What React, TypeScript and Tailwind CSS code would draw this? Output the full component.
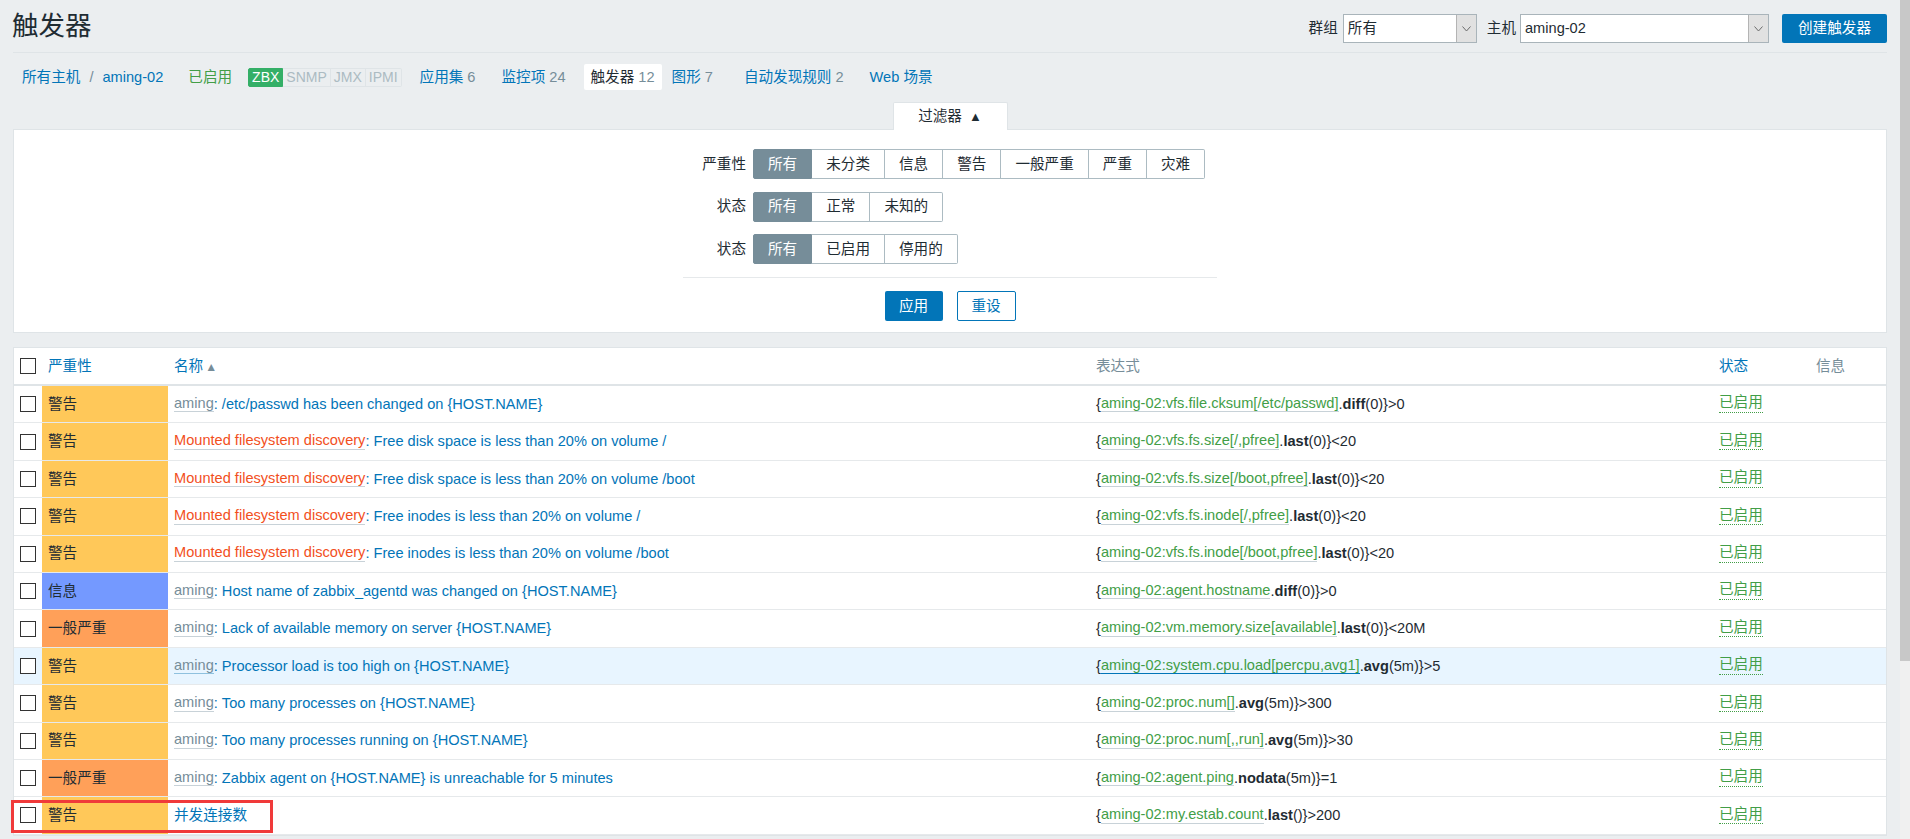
import React from 'react';

type Sev = 'warning' | 'info' | 'average';

const sevStyle: Record<Sev, { label: string; bg: string }> = {
  warning: { label: '警告', bg: 'bg-[#ffc859]' },
  info: { label: '信息', bg: 'bg-[#7499ff]' },
  average: { label: '一般严重', bg: 'bg-[#ffa059]' },
};

type Row = {
  sev: Sev;
  prefix?: string;
  orange?: boolean;
  name: string;
  item: string;
  fn: string;
  rest: string;
  hover?: boolean;
  marked?: boolean;
};

const rows: Row[] = [
  { sev: 'warning', prefix: 'aming', name: '/etc/passwd has been changed on {HOST.NAME}', item: 'aming-02:vfs.file.cksum[/etc/passwd]', fn: 'diff', rest: '(0)}>0' },
  { sev: 'warning', prefix: 'Mounted filesystem discovery', orange: true, name: 'Free disk space is less than 20% on volume /', item: 'aming-02:vfs.fs.size[/,pfree]', fn: 'last', rest: '(0)}<20' },
  { sev: 'warning', prefix: 'Mounted filesystem discovery', orange: true, name: 'Free disk space is less than 20% on volume /boot', item: 'aming-02:vfs.fs.size[/boot,pfree]', fn: 'last', rest: '(0)}<20' },
  { sev: 'warning', prefix: 'Mounted filesystem discovery', orange: true, name: 'Free inodes is less than 20% on volume /', item: 'aming-02:vfs.fs.inode[/,pfree]', fn: 'last', rest: '(0)}<20' },
  { sev: 'warning', prefix: 'Mounted filesystem discovery', orange: true, name: 'Free inodes is less than 20% on volume /boot', item: 'aming-02:vfs.fs.inode[/boot,pfree]', fn: 'last', rest: '(0)}<20' },
  { sev: 'info', prefix: 'aming', name: 'Host name of zabbix_agentd was changed on {HOST.NAME}', item: 'aming-02:agent.hostname', fn: 'diff', rest: '(0)}>0' },
  { sev: 'average', prefix: 'aming', name: 'Lack of available memory on server {HOST.NAME}', item: 'aming-02:vm.memory.size[available]', fn: 'last', rest: '(0)}<20M' },
  { sev: 'warning', prefix: 'aming', name: 'Processor load is too high on {HOST.NAME}', item: 'aming-02:system.cpu.load[percpu,avg1]', fn: 'avg', rest: '(5m)}>5', hover: true },
  { sev: 'warning', prefix: 'aming', name: 'Too many processes on {HOST.NAME}', item: 'aming-02:proc.num[]', fn: 'avg', rest: '(5m)}>300' },
  { sev: 'warning', prefix: 'aming', name: 'Too many processes running on {HOST.NAME}', item: 'aming-02:proc.num[,,run]', fn: 'avg', rest: '(5m)}>30' },
  { sev: 'average', prefix: 'aming', name: 'Zabbix agent on {HOST.NAME} is unreachable for 5 minutes', item: 'aming-02:agent.ping', fn: 'nodata', rest: '(5m)}=1' },
  { sev: 'warning', name: '并发连接数', item: 'aming-02:my.estab.count', fn: 'last', rest: '()}>200', marked: true },
];

function Checkbox() {
  return <div className="w-[16px] h-[16px] border-[1.5px] border-[#333] bg-white" />;
}

function Select({ value, width }: { value: string; width: string }) {
  return (
    <div className={`${width} h-[29px] flex border border-[#a9b4ba] bg-white`}>
      <div className="flex-1 flex items-center pl-[4px] text-[#1f2c33]">{value}</div>
      <div className="w-[20px] flex items-center justify-center bg-[#e1e1e1] border-l border-[#b4b4b4]">
        <svg width="9" height="6" viewBox="0 0 9 6" fill="none">
          <path d="M0.5 0.5 L4.5 5 L8.5 0.5" stroke="#6b6b6b" strokeWidth="1" />
        </svg>
      </div>
    </div>
  );
}

function Radio({ items }: { items: string[] }) {
  return (
    <div className="flex">
      {items.map((t, i) => (
        <div
          key={t}
          className={`h-[30px] px-[14px] flex items-center border-y border-r ${
            i === 0
              ? 'border-l rounded-l-[2px] bg-[#768d99] border-[#768d99] text-white'
              : 'border-[#acbbc2] bg-white text-[#1f2c33]'
          } ${i === items.length - 1 ? 'rounded-r-[2px]' : ''}`}
        >
          {t}
        </div>
      ))}
    </div>
  );
}

function NavLink({ label, count, className = '' }: { label: string; count?: string; className?: string }) {
  return (
    <div className={`px-[8px] h-[26px] flex items-center ${className}`}>
      <span className="text-[#0275b8]">{label}</span>
      {count && <span className="text-[#768d99] ml-[4px]">{count}</span>}
    </div>
  );
}

export default function App() {
  return (
    <div className="flex w-[1910px] h-[839px] overflow-hidden bg-[#ebeef0] font-['Liberation_Sans','Noto_Sans_CJK_SC',sans-serif] text-[14.6px] text-[#1f2c33] leading-none">
      <div className="flex-1 px-[13px] min-w-0">
        {/* header */}
        <div className="h-[53px] flex items-center justify-between border-b border-[#dfe4e7]">
          <h1 className="text-[26.5px] text-[#1f2c33] -ml-[1px] mt-[1px]">触发器</h1>
          <div className="flex items-center mt-[5px]">
            <span className="mr-[5px]">群组</span>
            <Select value="所有" width="w-[134px]" />
            <span className="ml-[10px] mr-[4px]">主机</span>
            <Select value="aming-02" width="w-[249px]" />
            <div className="ml-[13px] w-[105px] h-[29px] rounded-[2px] bg-[#0275b8] text-white flex items-center justify-center">
              创建触发器
            </div>
          </div>
        </div>

        {/* host navigation */}
        <div className="h-[48px] flex items-center">
          <span className="ml-[9px] text-[#0275b8]">所有主机</span>
          <span className="mx-[9px] text-[#768d99]">/</span>
          <span className="text-[#0275b8]">aming-02</span>
          <span className="ml-[25px] text-[#429e47]">已启用</span>
          <div className="ml-[16px] flex h-[19px] text-[14px]">
            <div className="px-[3px] flex items-center rounded-l-[2px] bg-[#34af67] border border-[#34af67] text-white">ZBX</div>
            <div className="px-[3px] flex items-center border border-l-0 border-[#dfe4e7] text-[#acbbc2]">SNMP</div>
            <div className="px-[3px] flex items-center border border-l-0 border-[#dfe4e7] text-[#acbbc2]">JMX</div>
            <div className="px-[3px] flex items-center rounded-r-[2px] border border-l-0 border-[#dfe4e7] text-[#acbbc2]">IPMI</div>
          </div>
          <div className="ml-[10px] flex items-center">
            <NavLink label="应用集" count="6" />
            <NavLink label="监控项" count="24" className="ml-[10px]" />
            <div className="ml-[10px] px-[7px] h-[26px] flex items-center bg-white rounded-[2px]">
              <span>触发器</span>
              <span className="text-[#768d99] ml-[4px]">12</span>
            </div>
            <NavLink label="图形" count="7" className="ml-[2px]" />
            <NavLink label="自动发现规则" count="2" className="ml-[15px]" />
            <NavLink label="Web 场景" className="ml-[10px]" />
          </div>
        </div>

        {/* filter */}
        <div className="flex justify-center">
          <div className="w-[115px] h-[28px] bg-white border border-b-0 border-[#dfe4e7] rounded-t-[2px] flex items-center justify-center gap-[7px] relative top-[1px]">
            <span>过滤器</span>
            <span className="text-[13px]">▲</span>
          </div>
        </div>
        <div className="h-[204px] bg-white border border-[#dfe4e7] flex flex-col items-center pt-[19px]">
          <div className="w-[534px] grid grid-cols-[63px_1fr] gap-x-[7px] gap-y-[12.5px] items-center">
            <div className="text-right">严重性</div>
            <Radio items={['所有', '未分类', '信息', '警告', '一般严重', '严重', '灾难']} />
            <div className="text-right">状态</div>
            <Radio items={['所有', '正常', '未知的']} />
            <div className="text-right">状态</div>
            <Radio items={['所有', '已启用', '停用的']} />
          </div>
          <div className="w-[534px] mt-[13px] border-t border-[#e6e9eb]" />
          <div className="mt-[13px] flex gap-[14px]">
            <div className="w-[58px] h-[30px] rounded-[2px] bg-[#0275b8] text-white flex items-center justify-center">应用</div>
            <div className="w-[59px] h-[30px] rounded-[2px] border border-[#0275b8] text-[#0275b8] bg-white flex items-center justify-center">重设</div>
          </div>
        </div>

        {/* table */}
        <div className="mt-[14px] bg-white border border-[#dfe4e7]">
          <div className="h-[38px] grid grid-cols-[28px_126px_922px_623px_97px_1fr] items-center border-b-2 border-[#dfe4e7]">
            <div className="pl-[6px]"><Checkbox /></div>
            <div className="pl-[6px] text-[#0275b8]">严重性</div>
            <div className="pl-[6px] text-[#0275b8]">名称<span className="text-[#768d99] text-[12px] ml-[2px]">▲</span></div>
            <div className="pl-[6px] text-[#768d99]">表达式</div>
            <div className="pl-[6px] text-[#0275b8]">状态</div>
            <div className="pl-[6px] text-[#768d99]">信息</div>
          </div>
          {rows.map((r, i) => (
            <div
              key={i}
              className={`relative h-[37.4px] grid grid-cols-[28px_126px_922px_623px_97px_1fr] border-b border-[#e6e9eb] ${
                r.hover ? 'bg-[#e8f5ff]' : ''
              }`}
            >
              <div className="pl-[6px] flex items-center"><Checkbox /></div>
              <div className={`pl-[6px] flex items-center ${sevStyle[r.sev].bg}`}>{sevStyle[r.sev].label}</div>
              <div className="pl-[6px] flex items-center whitespace-nowrap">
                {r.prefix && (
                  <>
                    <span
                      className={`${r.orange ? 'text-[#f24f1d]' : 'text-[#768d99]'} border-b ${
                        r.hover ? 'border-[#8fc1de]' : 'border-[#c8d2d8]'
                      } pb-[1px]`}
                    >
                      {r.prefix}
                    </span>
                    <span className="text-[#0275b8]">:&nbsp;</span>
                  </>
                )}
                <span className="text-[#0275b8]">{r.name}</span>
              </div>
              <div className="pl-[6px] flex items-center whitespace-nowrap">
                <span>{'{'}</span>
                <span className={`text-[#429e47] border-b ${r.hover ? 'border-[#0275b8]' : 'border-[#c8d2d8]'} pb-[1px]`}>{r.item}</span>
                <span>.</span>
                <span className="font-bold">{r.fn}</span>
                <span>{r.rest}</span>
              </div>
              <div className="pl-[6px] flex items-center">
                <span className="text-[#429e47] border-b border-dotted border-[#429e47] pb-[2px]">已启用</span>
              </div>
              <div />
              {r.marked && (
                <div className="absolute left-[-3px] top-[3px] w-[262px] h-[33px] border-[3px] border-[#f03a3a] pointer-events-none" />
              )}
            </div>
          ))}
        </div>
      </div>
      {/* browser scrollbar */}
      <div className="w-[10px] flex flex-col">
        <div className="h-[661px] bg-[#c8c8c8]" />
        <div className="flex-1 bg-[#f0f0f0]" />
      </div>
    </div>
  );
}
